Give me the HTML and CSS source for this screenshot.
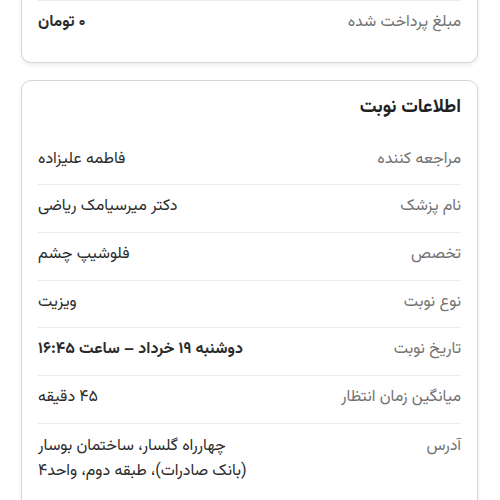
FILE: index.html
```html
<!DOCTYPE html>
<html lang="fa" dir="rtl">
<head>
<meta charset="utf-8">
<link rel="stylesheet" href="styles.css">
</head>
<body>
<div class="page">
  <section class="card card-top">
    <div class="row">
      <span class="label">مبلغ پرداخت شده</span>
      <span class="value strong">۰ تومان</span>
    </div>
  </section>
  <section class="card">
    <h2 class="title">اطلاعات نوبت</h2>
    <div class="row">
      <span class="label">مراجعه کننده</span>
      <span class="value">فاطمه علیزاده</span>
    </div>
    <div class="row">
      <span class="label">نام پزشک</span>
      <span class="value">دکتر میرسیامک ریاضی</span>
    </div>
    <div class="row">
      <span class="label">تخصص</span>
      <span class="value">فلوشیپ چشم</span>
    </div>
    <div class="row">
      <span class="label">نوع نوبت</span>
      <span class="value">ویزیت</span>
    </div>
    <div class="row">
      <span class="label">تاریخ نوبت</span>
      <span class="value strong">دوشنبه ۱۹ خرداد – ساعت ۱۶:۴۵</span>
    </div>
    <div class="row">
      <span class="label">میانگین زمان انتظار</span>
      <span class="value">۴۵ دقیقه</span>
    </div>
    <div class="row">
      <span class="label">آدرس</span>
      <span class="value address">چهارراه گلسار، ساختمان بوسار<br>(بانک صادرات)، طبقه دوم، واحد۴</span>
    </div>
  </section>
</div>
</body>
</html>
```
FILE: styles.css
```css
html, body {
  margin: 0;
  padding: 0;
  background: #ffffff;
}
body {
  font-family: "Vazirmatn", "Noto Sans Arabic", "DejaVu Sans", sans-serif;
  color: #333333;
  overflow: hidden;
}
.page {
  padding: 0 22px 0 21px;
  display: flex;
  flex-direction: column;
  gap: 17px;
}
.card {
  border: 1px solid #d3d6da;
  border-radius: 10px;
  background: #ffffff;
  box-shadow: 0 2px 4px rgba(0, 0, 0, 0.08);
  padding: 15px 16px 15px 16px;
}
.card-top {
  margin-top: -20px;
  padding-top: 19px;
  padding-bottom: 14px;
}
.card-top .row {
  border-top: 1px solid #ececec;
  padding-top: 10px;
}
.title {
  margin: 0 0 18px 0;
  font-size: 18.5px;
  line-height: 24px;
  font-weight: bold;
  color: #222222;
}
.row {
  display: flex;
  justify-content: space-between;
  align-items: baseline;
  padding: 10px 0 12.7px 0;
  line-height: 24px;
}
.row + .row {
  border-top: 1px solid #ececec;
}
.label {
  color: #727272;
  font-size: 16px;
  font-weight: 400;
}
.value {
  color: #2b2b2b;
  font-size: 16px;
  font-weight: 400;
}
.strong {
  font-weight: bold;
}
.address {
  text-align: left;
  line-height: 25px;
}
```
